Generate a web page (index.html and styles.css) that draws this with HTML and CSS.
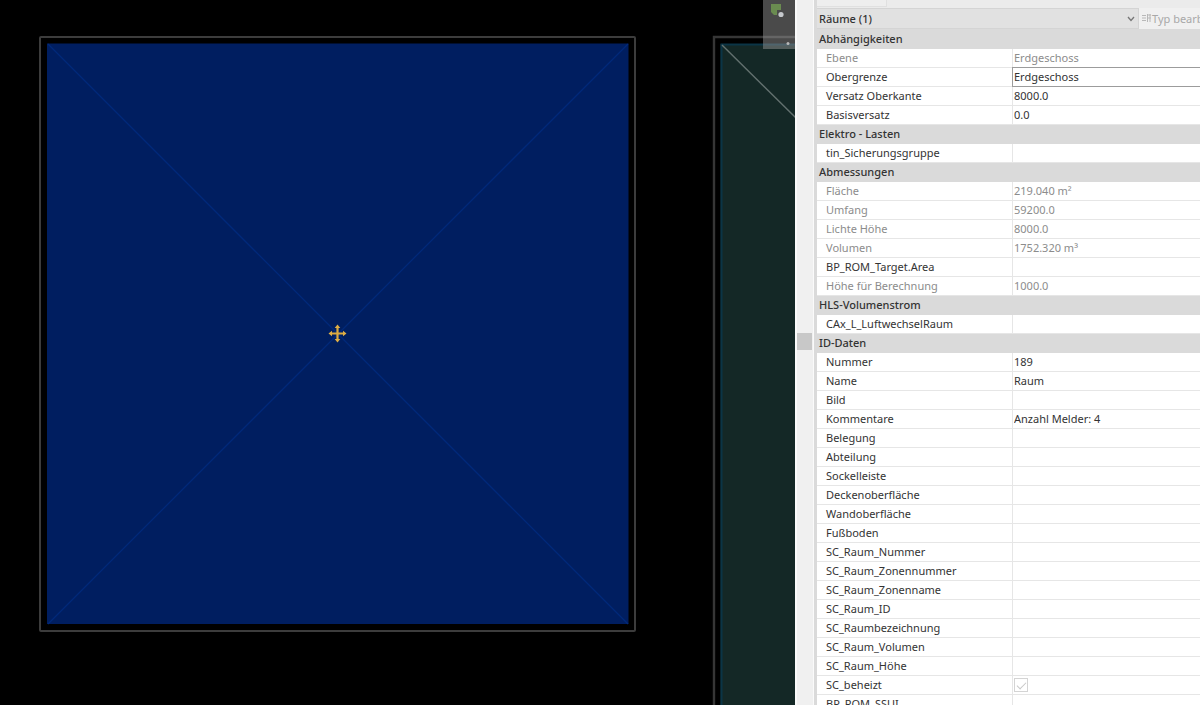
FILE: index.html
```html
<!DOCTYPE html>
<html lang="de">
<head>
<meta charset="utf-8">
<title>Raum – Eigenschaften</title>
<link rel="stylesheet" href="styles.css">
</head>
<body>
<div class="app">
<main class="view">
  <svg class="plan" viewBox="0 0 795 705" preserveAspectRatio="xMinYMin slice" role="img" aria-label="Grundriss">
    <rect x="40" y="37" width="595" height="594" rx="1" fill="none" stroke="#3c3c3c" stroke-width="2"/>
    <rect x="47" y="43.500" width="581.500" height="580.500" fill="#001e60"/>
    <path d="M48 44 628 624M628 44 48 624" stroke="#00297a" stroke-width="1.300"/>
    <path d="M714 705V37H795" fill="none" stroke="#363636" stroke-width="2.400"/>
    <rect x="720.500" y="44" width="80" height="670" fill="#142826"/>
    <path d="M721.500 705V44.500H795" fill="none" stroke="#0b3546" stroke-width="2"/>
    <path d="M722 45 796 118" stroke="#63716f" stroke-width="1.400"/>
    <g stroke="#d9a941" stroke-width="2.200" fill="#e0af45">
      <path d="M337.500 327V340M331 333.500H344"/>
      <g stroke="none"><path d="M337.500 324.500 340.300 328H334.700ZM337.500 342.500 340.300 339H334.700ZM328.500 333.500 332 330.700V336.300ZM346.500 333.500 343 330.700V336.300Z"/></g>
    </g>
  </svg>
  <button class="navbar" aria-label="Navigation">
    <svg width="32" height="49" viewBox="0 0 32 49"><path d="M8 4H18V10H14V15H11L8 12Z" fill="#6a8b50"/><circle cx="18" cy="14.500" r="2.600" fill="#c5c8cc"/><circle cx="25" cy="43.500" r="1.500" fill="#b8b8b8"/></svg>
  </button>
</main>
<aside class="panel">
  <div class="splitter"><span class="thumb"></span></div>
  <div class="properties">
    <div class="tabs"><span class="tab"></span></div>
    <div class="typebar">
      <div class="picker">
        <select class="type" aria-label="Elementtyp"><option>Räume (1)</option></select>
        <svg class="chevron" width="8" height="6" viewBox="0 0 8 6"><path d="M1 1 4 4.500 7 1" fill="none" stroke="#777" stroke-width="1.300"/></svg>
      </div>
      <button class="edit" disabled><svg width="9" height="9" viewBox="0 0 9 9"><path d="M0 1.500H4M0 4H4M0 6.500H4M5.500 0V8M8 0V8M5 1H9M5 4H9" stroke="#b8b8b8" fill="none"/></svg>Typ bearbeiten</button>
    </div>
    <table class="grid">
      <colgroup><col class="names"><col></colgroup>
      <tbody>
      <tr class="group"><th colspan="2">Abhängigkeiten</th></tr>
      <tr class="off"><th><label for="f1">Ebene</label></th><td><input id="f1" value="Erdgeschoss" disabled></td></tr>
      <tr class="active"><th><label for="f2">Obergrenze</label></th><td><input id="f2" value="Erdgeschoss"></td></tr>
      <tr><th><label for="f3">Versatz Oberkante</label></th><td><input id="f3" value="8000.0"></td></tr>
      <tr><th><label for="f4">Basisversatz</label></th><td><input id="f4" value="0.0"></td></tr>
      <tr class="group"><th colspan="2">Elektro - Lasten</th></tr>
      <tr><th><label for="f5">tin_Sicherungsgruppe</label></th><td><input id="f5"></td></tr>
      <tr class="group"><th colspan="2">Abmessungen</th></tr>
      <tr class="off"><th><label for="f6">Fläche</label></th><td><input id="f6" value="219.040 m²" disabled></td></tr>
      <tr class="off"><th><label for="f7">Umfang</label></th><td><input id="f7" value="59200.0" disabled></td></tr>
      <tr class="off"><th><label for="f8">Lichte Höhe</label></th><td><input id="f8" value="8000.0" disabled></td></tr>
      <tr class="off"><th><label for="f9">Volumen</label></th><td><input id="f9" value="1752.320 m³" disabled></td></tr>
      <tr><th><label for="f10">BP_ROM_Target.Area</label></th><td><input id="f10"></td></tr>
      <tr class="off"><th><label for="f11">Höhe für Berechnung</label></th><td><input id="f11" value="1000.0" disabled></td></tr>
      <tr class="group"><th colspan="2">HLS-Volumenstrom</th></tr>
      <tr><th><label for="f12">CAx_L_LuftwechselRaum</label></th><td><input id="f12"></td></tr>
      <tr class="group"><th colspan="2">ID-Daten</th></tr>
      <tr><th><label for="f13">Nummer</label></th><td><input id="f13" value="189"></td></tr>
      <tr><th><label for="f14">Name</label></th><td><input id="f14" value="Raum"></td></tr>
      <tr><th><label for="f15">Bild</label></th><td><input id="f15"></td></tr>
      <tr><th><label for="f16">Kommentare</label></th><td><input id="f16" value="Anzahl Melder: 4"></td></tr>
      <tr><th><label for="f17">Belegung</label></th><td><input id="f17"></td></tr>
      <tr><th><label for="f18">Abteilung</label></th><td><input id="f18"></td></tr>
      <tr><th><label for="f19">Sockelleiste</label></th><td><input id="f19"></td></tr>
      <tr><th><label for="f20">Deckenoberfläche</label></th><td><input id="f20"></td></tr>
      <tr><th><label for="f21">Wandoberfläche</label></th><td><input id="f21"></td></tr>
      <tr><th><label for="f22">Fußboden</label></th><td><input id="f22"></td></tr>
      <tr><th><label for="f23">SC_Raum_Nummer</label></th><td><input id="f23"></td></tr>
      <tr><th><label for="f24">SC_Raum_Zonennummer</label></th><td><input id="f24"></td></tr>
      <tr><th><label for="f25">SC_Raum_Zonenname</label></th><td><input id="f25"></td></tr>
      <tr><th><label for="f26">SC_Raum_ID</label></th><td><input id="f26"></td></tr>
      <tr><th><label for="f27">SC_Raumbezeichnung</label></th><td><input id="f27"></td></tr>
      <tr><th><label for="f28">SC_Raum_Volumen</label></th><td><input id="f28"></td></tr>
      <tr><th><label for="f29">SC_Raum_Höhe</label></th><td><input id="f29"></td></tr>
      <tr><th><label for="f30">SC_beheizt</label></th><td><input class="check" id="f30" type="checkbox" checked></td></tr>
      <tr><th><label for="f31">BP_ROM_SSUI</label></th><td><input id="f31"></td></tr>
      </tbody>
    </table>
  </div>
</aside>
</div>
</body>
</html>
```
FILE: styles.css
```css
* { box-sizing: border-box; }
body {
  margin: 0;
  background: #000;
  color: #333;
  font: 11px/18px "Noto Sans", "Open Sans", sans-serif;
}
.app {
  display: grid;
  grid-template-columns: minmax(0, 1fr) 405px;
  height: 100vh;
  overflow: hidden;
}
.view { position: relative; overflow: hidden; }
.plan { display: block; width: 100%; height: 100%; }
.navbar {
  position: absolute;
  top: 0;
  right: 0;
  padding: 0;
  border: 0;
  background: rgba(148, 148, 148, 0.5);
}
.navbar svg { display: block; }
.panel { display: flex; min-width: 0; background: #f0f0f0; overflow: hidden; }
.splitter {
  flex: 0 0 19px;
  display: flex;
  align-items: center;
  border-left: 2px solid #fafafa;
  border-right: 1px solid #fafafa;
}
.thumb { width: 15px; height: 17px; margin-bottom: 23px; background: #c8c8c8; }
.properties { flex: 1; min-width: 0; border-left: 3px solid #dadada; }
.tabs { height: 8px; background: #ebebeb; }
.tab { display: block; width: 70px; height: 7px; background: #eee; border: solid #e0e0e0; border-width: 0 1px 1px 0; }
.typebar { display: flex; height: 22px; border-bottom: 1px solid #dadada; overflow: hidden; }
.picker { position: relative; flex: 1; min-width: 0; }
.type {
  appearance: none;
  width: 100%;
  height: 21px;
  padding: 0 2px;
  border: 1px solid #d4d4d4;
  border-left: 0;
  border-radius: 0;
  background: #e1e1e1;
  color: #333;
  font: inherit;
  font-weight: 500;
}
.chevron { position: absolute; right: 4px; top: 8px; pointer-events: none; }
.edit {
  flex: 0 0 61px;
  display: flex;
  align-items: center;
  gap: 1px;
  padding: 0 0 0 3px;
  border: 0;
  background: #f0f0f0;
  color: #a8a8a8;
  font: inherit;
  white-space: nowrap;
  overflow: hidden;
}
.edit svg { flex: none; }
.grid { width: 100%; border-collapse: separate; border-spacing: 0; table-layout: fixed; background: #fff; }
.names { width: 195px; }
.grid tr { height: 19px; }
.grid th, .grid td { height: 19px; padding: 0; border-bottom: 1px solid #e6e6e6; }
.grid th { padding-left: 9px; text-align: left; font-weight: 400; white-space: nowrap; }
.grid td { border-left: 1px solid #e6e6e6; }
.grid label { display: block; }
.grid .group th { padding-left: 2px; background: #dadada; border-color: #dadada; font-weight: 500; }
.grid input {
  display: block;
  width: 100%;
  height: 18px;
  padding: 0 1px;
  border: 0;
  background: transparent;
  color: #333;
  font: inherit;
}
.grid .off th, .grid .off input { color: #8c8c8c; }
.grid .active input { outline: 1px solid #9c9c9c; }
.grid .check {
  appearance: none;
  width: 14px;
  height: 14px;
  margin: 1px;
  border: 1px solid #d4d4d4;
  display: grid;
  place-items: center;
}
.check::before {
  content: "";
  width: 8px;
  height: 4px;
  margin-bottom: 2px;
  border: solid #c8c8c8;
  border-width: 0 0 1px 1px;
  transform: rotate(-45deg);
}
```
